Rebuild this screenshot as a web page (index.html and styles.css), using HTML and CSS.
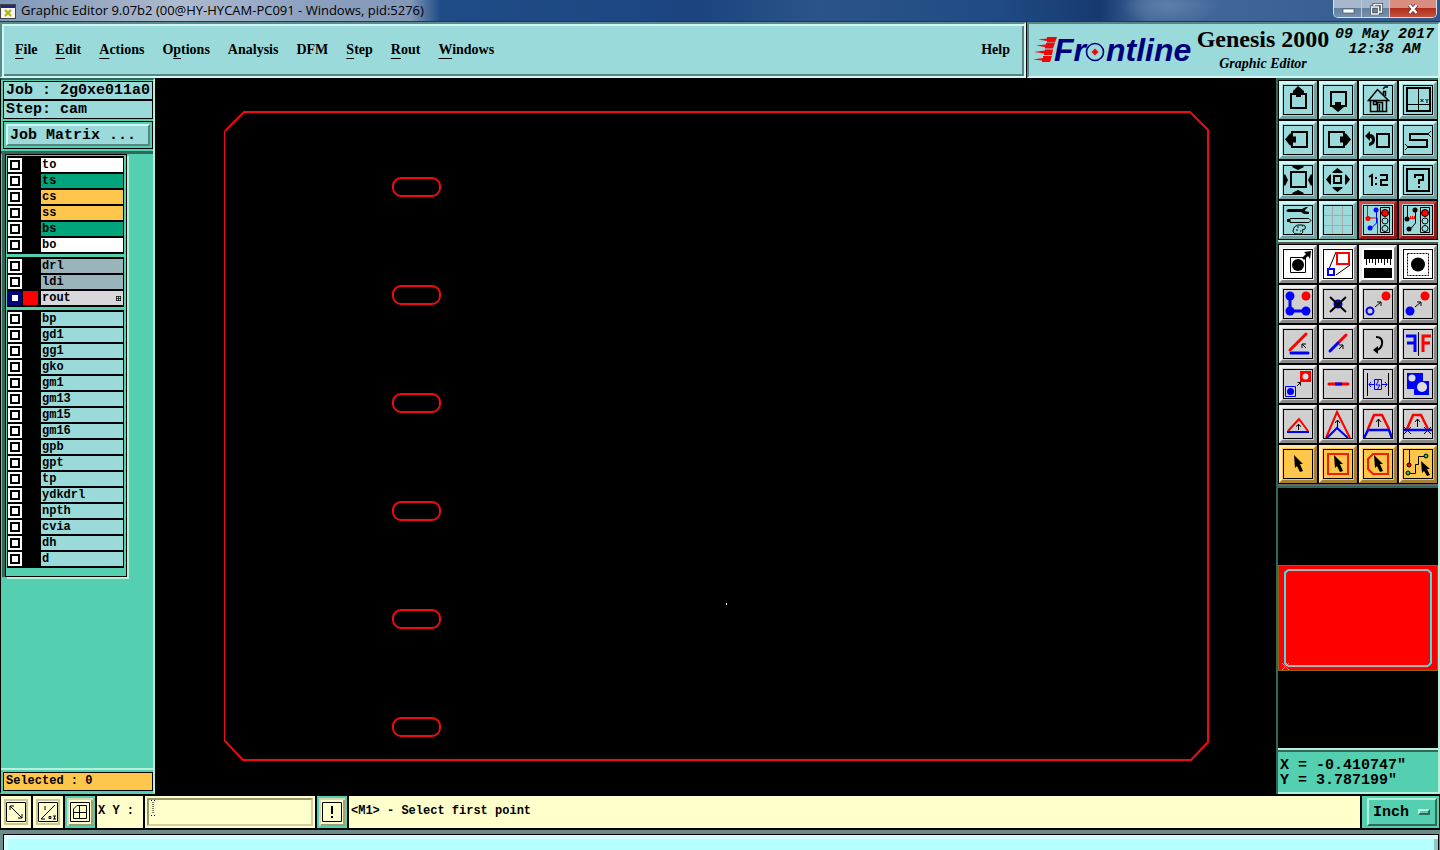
FILE: index.html
```html
<!DOCTYPE html>
<html lang="en">
<head>
<meta charset="utf-8">
<title>Graphic Editor 9.07b2</title>
<link rel="stylesheet" href="styles.css">
</head>
<body>
<header class="titlebar">
  <svg class="app-icon" viewBox="0 0 16 16"><rect x=".5" y=".5" width="15" height="14" fill="#f4f4f4" stroke="#444"/><rect x="1" y="1" width="14" height="3" fill="#1c2a80"/><path d="M5 6l6 6M11 6l-6 6" stroke="#b0b000" stroke-width="2"/></svg>
  <h1 class="title">Graphic Editor 9.07b2 (00@HY-HYCAM-PC091 - Windows, pid:5276)</h1>
  <div class="window-buttons">
    <button class="win" aria-label="Minimize"><svg viewBox="0 0 14 12"><rect x="2" y="6" width="11" height="4" fill="#fff" stroke="#456" stroke-width=".7"/></svg></button>
    <button class="win" aria-label="Restore"><svg viewBox="0 0 14 12"><path d="M5 3V1.500H12.500V9H10M2.500 4H9.500V11H2.500z" fill="none" stroke="#345" stroke-width="3"/><path d="M5 3V1.500H12.500V9H10M2.500 4H9.500V11H2.500z" fill="none" stroke="#fff" stroke-width="1.500"/></svg></button>
    <button class="win win-close" aria-label="Close"><svg viewBox="0 0 14 12"><path d="M3.500 2l7 8M10.500 2l-7 8" stroke="#533" stroke-width="4"/><path d="M3.500 2l7 8M10.500 2l-7 8" stroke="#fff" stroke-width="2.500"/></svg></button>
  </div>
</header>

<div class="topbar">
  <nav class="menubar">
    <button><u>F</u>ile</button><button><u>E</u>dit</button><button><u>A</u>ctions</button><button>O<u>p</u>tions</button><button>Analysis</button><button>DFM</button><button><u>S</u>tep</button><button><u>R</u>out</button><button><u>W</u>indows</button><button class="help">Help</button>
  </nav>
  <section class="brand">
    <svg class="logo" viewBox="0 0 162 32" role="img" aria-label="Frontline">
      <g fill="#f00808"><path d="M5 5.500L14 4.500V3H24L22 8.500H14V7z"/><path d="M3 11.500L13 10.500V9H22L20 14.500H12V13z"/><path d="M1 18L12 16.500V15.500H20L19 21H11V19.500z"/><path d="M0 25.500L10 24V22H19L17 28H9V26.500z"/></g>
      <text x="21" y="27" class="logo-text">Fr</text><text x="73" y="27" class="logo-text">ntline</text>
      <circle cx="62" cy="18" r="8.500" fill="none" stroke="#00007c" stroke-width="1.600"/><path d="M62 14.500l3.500 3.500-3.500 3.500-3.500-3.500z" fill="#f00808"/>
    </svg>
    <div class="product"><strong>Genesis 2000</strong><em>Graphic Editor</em></div>
    <time class="clock"><span>09 May 2017</span><span>12:38 AM</span></time>
  </section>
</div>

<main class="workspace">
  <aside class="layers">
    <div class="job">
      <div class="job-line">Job : 2g0xe011a0</div>
      <div class="job-line">Step: cam</div>
      <div class="matrix"><button>Job Matrix ...</button></div>
    </div>
    <div class="layer-area">
      <div class="layer-list">
        <div class="layer-group">
          <label class="layer white"><input type="checkbox"><i></i><span>to</span></label>
          <label class="layer green"><input type="checkbox"><i></i><span>ts</span></label>
          <label class="layer amber"><input type="checkbox"><i></i><span>cs</span></label>
          <label class="layer amber"><input type="checkbox"><i></i><span>ss</span></label>
          <label class="layer green"><input type="checkbox"><i></i><span>bs</span></label>
          <label class="layer white"><input type="checkbox"><i></i><span>bo</span></label>
        </div>
        <div class="layer-group">
          <label class="layer slate"><input type="checkbox"><i></i><span>drl</span></label>
          <label class="layer slate"><input type="checkbox"><i></i><span>ldi</span></label>
          <label class="layer silver"><input type="checkbox" checked><i></i><span>rout<svg class="mark" viewBox="0 0 5 5"><path d="M0 .5H5M0 2.500H5M0 4.500H5M.5 0V5M2.500 0V5M4.500 0V5" stroke="#000" stroke-width=".7"/></svg></span></label>
        </div>
        <div class="layer-group">
          <label class="layer"><input type="checkbox"><i></i><span>bp</span></label>
          <label class="layer"><input type="checkbox"><i></i><span>gd1</span></label>
          <label class="layer"><input type="checkbox"><i></i><span>gg1</span></label>
          <label class="layer"><input type="checkbox"><i></i><span>gko</span></label>
          <label class="layer"><input type="checkbox"><i></i><span>gm1</span></label>
          <label class="layer"><input type="checkbox"><i></i><span>gm13</span></label>
          <label class="layer"><input type="checkbox"><i></i><span>gm15</span></label>
          <label class="layer"><input type="checkbox"><i></i><span>gm16</span></label>
          <label class="layer"><input type="checkbox"><i></i><span>gpb</span></label>
          <label class="layer"><input type="checkbox"><i></i><span>gpt</span></label>
          <label class="layer"><input type="checkbox"><i></i><span>tp</span></label>
          <label class="layer"><input type="checkbox"><i></i><span>ydkdrl</span></label>
          <label class="layer"><input type="checkbox"><i></i><span>npth</span></label>
          <label class="layer"><input type="checkbox"><i></i><span>cvia</span></label>
          <label class="layer"><input type="checkbox"><i></i><span>dh</span></label>
          <label class="layer"><input type="checkbox"><i></i><span>d</span></label>
        </div>
      </div>
    </div>
    <div class="selected"><div>Selected : 0</div></div>
  </aside>

  <section class="canvas">
    <svg viewBox="155 78 1121 717" fill="none" stroke="#f00c0c" stroke-width="2">
      <path d="M225 131L244 112H1190L1208 130V742L1191 760H243L225 741"/><path d="M224.500 131V742" stroke-width="1"/>
      <rect x="393" y="178" width="47" height="18" rx="8"/><rect x="393" y="286" width="47" height="18" rx="8"/><rect x="393" y="394" width="47" height="18" rx="8"/><rect x="393" y="502" width="47" height="18" rx="8"/><rect x="393" y="610" width="47" height="18" rx="8"/><rect x="393" y="718" width="47" height="18" rx="8"/>
      <rect x="726" y="603" width="1" height="2" fill="#fff" stroke="none"/>
    </svg>
  </section>

  <aside class="tools">
    <div class="toolset view-tools">
      <button aria-label="Pan up"><svg viewBox="0 0 30 30"><path class="k2" d="M8 9H23V23H8z"/><path d="M15 1l6 5v2h-3v4h-5V8h-3V6z"/></svg></button>
      <button aria-label="Pan down"><svg viewBox="0 0 30 30"><path class="k2" d="M8 7H23V21H8z"/><path d="M15 27l6-5v-2h-3v-3h-6v3h-3v2z"/></svg></button>
      <button aria-label="Home"><svg viewBox="0 0 30 30"><path class="k1" stroke-width="1.500" d="M5.500 15.500L14.500 4.500 25.500 15.500zM7.500 15V26.500H23.500V15M10.500 16.500h3v3h-3zM14.500 26V17.500h5V26M16.500 26v-7M20.500 10V6.500h2V11M20 4l2-2h3"/></svg></button>
      <button aria-label="View coordinates"><svg viewBox="0 0 30 30"><path class="k2" d="M4 3H27V26H4z"/><path class="k1" d="M15.500 3V26M4 19.500H27M17.500 14l3 3m0-3l-3 3M22.500 14l1.500 1.500 1.500-1.500M24 15.500V18"/></svg></button>
      <button aria-label="Pan left"><svg viewBox="0 0 30 30"><path class="k2" d="M9 7H24V22H9z"/><path d="M2 14.500l5-6h2v3h4v6H9v3H7z"/></svg></button>
      <button aria-label="Pan right"><svg viewBox="0 0 30 30"><path class="k2" d="M6 7H21V22H6z"/><path d="M28 14.500l-5-6h-2v3h-4v6h4v3h2z"/></svg></button>
      <button aria-label="Previous view"><svg viewBox="0 0 30 30"><path class="k2" d="M14 9H26V22H14z"/><path d="M2 11l5-5v3q5 0 5 6 0 5-6 6v-3q3-1 3-3 0-2-2-2v3z"/></svg></button>
      <button aria-label="Snake view"><svg viewBox="0 0 30 30"><path class="k2" d="M25 9H7V15H24V22H5"/><path class="k1" d="M28 6l-3 3 3 3M2 19l3 3-3 3"/></svg></button>
      <button aria-label="Zoom in"><svg viewBox="0 0 30 30"><path class="k2" d="M8 7H23V22H8z"/><path d="M11 0h8l2 2-6 3-6-3zM11 30h8l2-2-6-3-6 3zM0 11v8l2 2 3-6-3-6zM30 11v8l-2 2-3-6 3-6z"/></svg></button>
      <button aria-label="Zoom out"><svg viewBox="0 0 30 30"><path class="k2" d="M11 11H18V18H11z"/><path d="M14.500 3l5 4v1h-10V7zM14.500 27l5-4v-1h-10v1zM3 14.500l4-5h1v10H7zM27 14.500l-4-5h-1v10h1z"/></svg></button>
      <button aria-label="Scale one to two"><svg viewBox="0 0 30 30"><path class="k2" d="M6 12l3-2v11M13 12v2M13 18v2M17 10H24V15H18V20H25"/></svg></button>
      <button aria-label="Query"><svg viewBox="0 0 30 30"><path class="k2" d="M4 4H26V26H4zM12 13V10H20V15H16V19M16 21V23"/></svg></button>
      <button aria-label="Options"><svg viewBox="0 0 30 30"><path d="M3 6l2-2h14l4-2h2l-3 3v1l4 1v2h-5l-3-2H5zM4 15v-1h3v3H4z"/><path class="k1" d="M7 13.500H26L28 15.500 26 17.500H7zM10 26q1-7 8-6 6 0 4 4l-3 1 1 2q-1 3-5 2-5 0-5-3zM14 22h2m3-1h1M13 25h2m2 1h1"/></svg></button>
      <button aria-label="Grid"><svg viewBox="0 0 30 30"><path d="M9.500 0V30M19.500 0V30M0 10.500H30M0 20.500H30" stroke="#a9a9a9"/></svg></button>
      <button class="alert" aria-label="Connectivity"><svg viewBox="0 0 30 30"><path d="M4.500 1V13H14.500V29" fill="none" stroke="red"/><path d="M13.500 5V18L8 23.500" fill="none" stroke="blue"/><circle cx="13" cy="5" r="2.500" fill="blue"/><circle cx="5" cy="13.500" r="2.500" fill="red"/><circle cx="7" cy="23" r="2.500" fill="blue"/><path class="k1" d="M17.500 2.500h9v25h-9z"/><circle cx="22" cy="8" r="3.500" fill="red" stroke="#000"/><circle class="k1" cx="22" cy="16" r="3"/><circle class="k1" cx="22" cy="23.500" r="3"/></svg></button>
      <button class="alert" aria-label="Spacing"><svg viewBox="0 0 30 30"><path class="k1" d="M4.500 1V13M12.500 5V18L8 23.500M17.500 2.500h9v25h-9z"/><circle cx="12" cy="5" r="2.500"/><circle cx="4" cy="14" r="2.500"/><circle cx="6" cy="24" r="2.500"/><path d="M6 13.500H12M7.500 11V14M9.500 11V14M11.500 11V14" stroke="red"/><circle cx="22" cy="8" r="3.500" fill="red" stroke="#000"/><circle class="k1" cx="22" cy="16" r="3"/><circle class="k1" cx="22" cy="23.500" r="3"/></svg></button>
    </div>

    <div class="toolset edit-tools">
      <button class="plain" aria-label="Pad"><svg viewBox="0 0 30 30"><path class="k1" d="M7.500 8.500h15v15h-15z"/><circle cx="15" cy="16" r="6"/><path d="M19 9l4-4-2-2 7-1-1 8-2-3-4 4z"/></svg></button>
      <button class="plain" aria-label="Resize"><svg viewBox="0 0 30 30"><path class="k1" d="M6 20L13 3M13 26L27 16"/><path d="M14 4H26V15H14z" fill="none" stroke="red" stroke-width="2"/><path d="M5 20H11V26H5z" fill="none" stroke="blue" stroke-width="2"/></svg></button>
      <button class="plain ruler" aria-label="Measure"><svg viewBox="0 0 30 30"><path d="M1 1H29V29H1z"/><path d="M1 10H29V19H1z" fill="#fff"/><path class="k1" d="M3.500 10v6M6.500 10v4M9.500 10v4M12.500 10v6M15.500 10v4M18.500 10v4M21.500 10v6M24.500 10v4M27.500 10v6"/></svg></button>
      <button class="plain" aria-label="Select feature"><svg viewBox="0 0 30 30"><path class="k1" d="M4.500 4.500h21v22h-21z" stroke-dasharray="2 1"/><circle cx="15" cy="15.500" r="7"/></svg></button>
      <button aria-label="Join points"><svg viewBox="0 0 30 30"><path d="M7 7V22H23" stroke="blue" stroke-width="3" fill="none"/><g fill="blue"><circle cx="7" cy="7" r="4.500"/><circle cx="7" cy="22" r="4.500"/><circle cx="23" cy="22" r="4.500"/></g><circle cx="23" cy="7" r="4.500" fill="red"/></svg></button>
      <button aria-label="Delete"><svg viewBox="0 0 30 30"><circle cx="15" cy="15" r="4.500" fill="#00a"/><path class="k2" d="M7 8L23 23M23 8L7 23"/></svg></button>
      <button aria-label="Copy"><svg viewBox="0 0 30 30"><circle cx="7" cy="22" r="3.500" fill="none" stroke="blue" stroke-width="2"/><circle cx="23" cy="7" r="4.500" fill="red"/><path class="k1" d="M12 18l6-5M14 13h4v4"/></svg></button>
      <button aria-label="Move"><svg viewBox="0 0 30 30"><circle cx="7" cy="22" r="4.500" fill="blue"/><circle cx="22" cy="7" r="4.500" fill="red"/><path class="k1" d="M12 18l6-5M14 13h4v4"/></svg></button>
      <button aria-label="Angle"><svg viewBox="0 0 30 30"><path d="M7 21L23 5" stroke="red" stroke-width="3" stroke-linecap="round"/><path d="M8 24H25" stroke="blue" stroke-width="3" stroke-linecap="round"/><path class="k1" d="M23 19l-4-4M19 19v-4h4"/></svg></button>
      <button aria-label="Extend"><svg viewBox="0 0 30 30"><path d="M15 14L23 6" stroke="red" stroke-width="3" stroke-linecap="round"/><path d="M7 22L15 14" stroke="blue" stroke-width="3" stroke-linecap="round"/><path class="k1" d="M16 20l4-4M16 16h4v4"/></svg></button>
      <button aria-label="Rotate"><svg viewBox="0 0 30 30"><path class="k2" d="M13 8Q20 8 19 15 18 21 12 21"/><path d="M10 21l5-4v8z"/></svg></button>
      <button aria-label="Mirror"><svg viewBox="0 0 30 30"><path class="k1" d="M15.500 3V27"/><path d="M3 7H12V23M4 14H12" fill="none" stroke="blue" stroke-width="3"/><path d="M28 7H20V23M27 14H20" fill="none" stroke="red" stroke-width="3"/></svg></button>
      <button aria-label="Substitute"><svg viewBox="0 0 30 30"><path d="M17 2h11v11H17z" fill="red"/><circle cx="22.500" cy="7.500" r="3" fill="#ddd"/><path d="M2.500 17.500h10v10h-10z" fill="none" stroke="blue"/><circle cx="7.500" cy="22.500" r="3.500" fill="blue"/><path class="k1" d="M14 17l3-3M14.500 13.500h3v3"/></svg></button>
      <button aria-label="Break line"><svg viewBox="0 0 30 30"><path d="M6 15H25" stroke="red" stroke-width="3" stroke-linecap="round"/><path d="M12 15H19" stroke="blue" stroke-width="3"/></svg></button>
      <button aria-label="Spread"><svg viewBox="0 0 30 30"><path class="k1" d="M4.500 4V27M25.500 4V27"/><path d="M6 15.500H11M19 15.500H24M8 13l-2 2.500L8 18M22 13l2 2.500L22 18M11.500 10.500h7v10h-7zM15 10v3l-2 3h4l-2 3v2" fill="none" stroke="blue"/></svg></button>
      <button aria-label="Cut shape"><svg viewBox="0 0 30 30"><path d="M4 4H20V12H26V26H11V20H4z" fill="blue"/><circle cx="9" cy="9" r="3.500" fill="#ddd"/><circle cx="19" cy="18" r="5" fill="#ddd"/></svg></button>
      <button aria-label="Low triangle"><svg viewBox="0 0 30 30"><path d="M5 22L16 10L25 22" fill="none" stroke="red" stroke-width="2"/><path d="M4 23H26" stroke="blue" stroke-width="2"/><path class="k1" d="M15.500 21V15M13 17.500l2.500-2 2.500 2"/></svg></button>
      <button aria-label="High triangle"><svg viewBox="0 0 30 30"><path d="M3 29L14 3L27 29" fill="none" stroke="red" stroke-width="2"/><path d="M4 29L14 19L25 29" fill="none" stroke="blue" stroke-width="2"/><path class="k1" d="M14.500 19V11M12 14l2.500-3 2.500 3"/></svg></button>
      <button aria-label="Trapezoid"><svg viewBox="0 0 30 30"><path d="M5 20L11 6H19L26 20" fill="none" stroke="red" stroke-width="2.500"/><path d="M1 29L5 21H26L29 29" fill="none" stroke="blue" stroke-width="2.500"/><path class="k1" d="M15.500 18V10M13 13l2.500-3 2.500 3"/></svg></button>
      <button aria-label="Open trapezoid"><svg viewBox="0 0 30 30"><path d="M4 20L10 6H18L25 20" fill="none" stroke="red" stroke-width="2.500"/><path d="M0 21H29" stroke="blue" stroke-width="2.500"/><path class="k1" d="M14.500 18V10M12 13l2.500-3 2.500 3M1 18l7 7M8 18l-7 7M21 18l7 7M28 18l-7 7"/></svg></button>
      <button class="pick" aria-label="Select"><svg viewBox="0 0 30 30"><path d="M11 6L20 15H17L20 22 17 23 14 17 12 19z"/></svg></button>
      <button class="pick" aria-label="Select in frame"><svg viewBox="0 0 30 30"><path d="M5 5H25V25H5z" fill="none" stroke="#f02000" stroke-width="2"/><path d="M11 6L20 15H17L20 22 17 23 14 17 12 19z"/></svg></button>
      <button class="pick" aria-label="Select in polygon"><svg viewBox="0 0 30 30"><path d="M10 5H25V25H10L5 20V10z" fill="none" stroke="#f02000" stroke-width="2"/><path d="M11 6L20 15H17L20 22 17 23 14 17 12 19z"/></svg></button>
      <button class="pick" aria-label="Select net"><svg viewBox="0 0 30 30"><path class="k1" d="M6.500 0V16M6 24.500H12.500V15.500H15.500V7.500H22"/><circle cx="6" cy="16" r="2" fill="red" stroke="#000"/><circle cx="5" cy="24" r="2" fill="#2c4" stroke="#000"/><circle cx="23" cy="7" r="2" fill="#2c4" stroke="#000"/><path d="M18 12L27 20H24L27 26 24 27 21 22 19 24z"/></svg></button>
    </div>

    <div class="navigator">
      <svg viewBox="0 0 160 106" fill="none">
        <rect x=".5" y=".5" width="159" height="105" fill="#f00" stroke="#8c6410"/>
        <path d="M10 6.500H150M10 102.500H150" stroke="#744"/><path d="M10 5H150M10 101H150" stroke="#b4b4b4" stroke-width="2"/>
        <path d="M10 5L7 8V98L10 101M150 5L153 8V98L150 101" stroke="#40e0e0" stroke-width="2"/>
        <path d="M4 98l7 7M11 98l-7 7" stroke="#c8b4b4"/>
      </svg>
    </div>
    <output class="coords"><span>X = -0.410747"</span><span>Y = 3.787199"</span></output>
  </aside>
</main>

<form class="command">
  <button type="button" class="cmd flat" aria-label="Snap"><svg viewBox="0 0 20 20"><path d="M.5.5h19v19H.5zM4 4L16 16M4 8V4H8M12 16H16V12"/></svg></button>
  <button type="button" class="cmd flat" aria-label="Angle mode"><svg viewBox="0 0 20 20"><path d="M.5.5h19v19H.5zM3 17L17 3M3 17H7M7 4V8M11 14.500h2v2h-2zM15 14h3M15 17h3M16.500 14v3"/></svg></button>
  <button type="button" class="cmd framed" aria-label="Grid snap"><svg viewBox="0 0 20 20"><path d="M.5.5h19v19H.5zM7 3.500H16.500V16.500H3.500V7zM9.500 3V17M3 10.500H17"/></svg></button>
  <label class="xy" for="xy">X Y :</label>
  <div class="entry"><input id="xy" type="text"><svg class="caret" viewBox="0 0 4 16"><path d="M2 2V14M0 .5H1M3 .5H4M0 15.500H1M3 15.500H4" stroke="#000" stroke-dasharray="1 1" fill="none"/></svg></div>
  <button type="button" class="cmd framed" aria-label="Alert"><svg viewBox="0 0 20 20"><path d="M.5.5h19v19H.5z"/><path d="M10 4V12M10 14V16" stroke-width="2"/></svg></button>
  <p class="message">&lt;M1&gt; - Select first point</p>
  <div class="unit"><select aria-label="Units"><option>Inch</option><option>MM</option></select><i></i></div>
</form>
<footer class="status"><div></div></footer>
</body>
</html>
```

FILE: styles.css
```css
* { box-sizing: border-box; }
:root {
  --teal: #54d0b0; --teal-dark: #33675b; --teal-light: #b4f0dc;
  --aqua: #9adada; --aqua-dark: #588484; --aqua-light: #d0f6f6;
  --cream: #ffffcc;
}
body { margin: 0; height: 100vh; overflow: hidden; display: flex; flex-direction: column; background: #000; color: #000; font-family: "Liberation Mono", monospace; font-weight: bold; }
button, input, select { font: inherit; color: inherit; margin: 0; padding: 0; border: 0; border-radius: 0; background: none; }
svg { display: block; }

.titlebar { flex: none; height: 22px; display: flex; align-items: flex-start; padding-right: 3px; border-bottom: 1px solid #27364c;
  background: radial-gradient(ellipse 50px 18px at 1170px 6px, #5f7fa8, transparent), linear-gradient(90deg, #7f98b8 0, #98a9c2 100px, #aebbd0 180px, #8da2c0 300px, #8398b8 410px, #1f4c86 440px, #1c4580 700px, #2a548a 820px, #1f4a84 1000px, #163a70 1100px, #44699a 1150px, #3a6296 1300px, #33568a 100%); }
.app-icon { width: 16px; height: 16px; margin: 4px 5px 0 0; }
.title { margin: 0; font: 13px/20px "Open Sans", sans-serif; flex: 1; white-space: nowrap; }
.window-buttons { display: flex; border: 1px solid #d4dfeb; border-top: 0; border-radius: 0 0 5px 5px; overflow: hidden; }
.win { width: 28px; height: 17px; display: grid; place-items: center; border-right: 1px solid #c0cddc; background: linear-gradient(#a7b7cb 45%, #64809f 50%, #7890ae); }
.win svg { width: 14px; height: 12px; }
.win-close { width: 46px; border: 0; background: linear-gradient(#d98c80 45%, #b22d1c 50%, #c5513b); }

.topbar { flex: none; display: flex; height: 56px; }
.menubar { flex: 1; margin-right: 1px; display: flex; align-items: center; gap: 18px; padding: 0 14px 0 13px; border: solid; border-width: 2px; border-color: #5c8a8a #d0f6f6 #d0f6f6 #5c8a8a; background: var(--aqua); box-shadow: inset 2px 2px var(--aqua-light), inset -2px -2px var(--aqua-dark); font: bold 14px/18px "Liberation Serif", serif; }
.menubar u { text-underline-offset: 4px; }
.menubar .help { margin-left: auto; }
.brand { width: 413px; display: flex; border: 2px solid; border-color: var(--aqua-dark) var(--aqua-light) var(--aqua-light) var(--aqua-dark); background: var(--aqua); font-family: "Liberation Serif", serif; }
.logo { width: 162px; height: 32px; margin: 10px 0 0 4px; overflow: visible; }
.logo-text { font: italic bold 32px "Liberation Sans", sans-serif; fill: #00007c; }
.product { width: 136px; display: flex; flex-direction: column; align-items: center; white-space: nowrap; }
.product strong { font-size: 24px; line-height: 30px; }
.product em { font-size: 14px; line-height: 20px; }
.clock { flex: 1; padding-top: 3px; display: flex; flex-direction: column; align-items: center; white-space: nowrap; font: italic bold 15px/15px "Liberation Mono", monospace; }

.workspace { flex: 1; min-height: 0; display: flex; }
.layers { width: 155px; flex: none; display: flex; flex-direction: column; margin-bottom: 1px; background: var(--teal); border: solid; border-width: 2px 2px 2px 1px; border-color: var(--teal-dark) var(--teal-light) var(--teal) #000; }
.job { padding: 1px 0 2px 2px; border-bottom: 3px solid var(--teal-dark); }
.job-line { height: 19px; padding-left: 2px; overflow: hidden; border: 1px solid #000; background: var(--aqua); font-size: 15px; line-height: 17px; white-space: nowrap; }
.matrix { margin-top: 2px; padding: 2px; border: 1px solid #000; }
.matrix button { width: 100%; height: 22px; padding-left: 2px; border: 2px solid; border-color: var(--aqua-light) var(--aqua-dark) var(--aqua-dark) var(--aqua-light); background: var(--aqua); font-size: 15px; line-height: 17px; text-align: left; }
.layer-area { flex: 1; padding-right: 26px; }
.layer-list { margin-left: 4px; padding: 1px 2px 8px 1px; border: 1px solid #000; box-shadow: 2px 2px var(--teal-light), -3px 0 var(--teal-dark); display: grid; gap: 3px; }
.layer-group { padding: 1px; background: #000; }
.layer { height: 16px; display: flex; align-items: center; }
.layer input { appearance: none; flex: none; width: 10px; height: 10px; margin: 0 3px 0 2px; border: 2px solid #000; background: #fff; box-shadow: 0 0 0 2px #fff; }
.layer input:checked { border-color: #00007c; box-shadow: 0 0 0 2px #00007c; }
.layer i { width: 15px; height: 14px; margin-right: 3px; }
.layer input:checked + i { background: #f00; }
.layer span { flex: 1; height: 14px; padding: 0 2px 0 1px; display: flex; align-items: center; justify-content: space-between; background: var(--aqua); font-size: 12px; line-height: 14px; }
.mark { width: 5px; height: 5px; }
.layer.white span { background: #fff; }
.layer.green span { background: #00a57c; }
.layer.amber span { background: #ffc64c; }
.layer.slate span { background: #9ab4bc; }
.layer.silver span { background: #d8d8dc; }
.selected { border-top: 2px solid var(--teal-light); padding: 2px 0 1px 2px; }
.selected div { height: 19px; padding-left: 2px; border: 1px solid #000; background: #ffc64c; font-size: 12px; line-height: 17px; }

.canvas { flex: 1; min-width: 0; }
.canvas svg { width: 100%; height: 100%; }

.tools { width: 164px; flex: none; display: flex; flex-direction: column; margin-bottom: 1px; border-left: 2px solid var(--teal-dark); border-right: 2px solid var(--teal-light); }
.toolset { display: grid; grid-template-columns: repeat(4, 1fr); gap: 2px; padding: 1px; border-top: 2px solid var(--teal-dark); border-bottom: 2px solid var(--teal-light); }
.toolset button { height: 38px; padding: 1px; display: grid; place-items: center; border: 3px solid; }
.toolset svg { width: 30px; height: 30px; outline: 1px solid #000; outline-offset: -1px; }
.view-tools button { background: var(--aqua); border-color: var(--aqua-light) #6fa3a3 #6fa3a3 var(--aqua-light); }
.view-tools .alert { border-color: #d44 #901818 #901818 #d44; }
.edit-tools { border-top-color: #555; border-bottom-color: #666; }
.edit-tools button { background: #cfcfcf; border-color: #efefef #8a8a8a #8a8a8a #efefef; }
.edit-tools .plain { background: #fff; }
.edit-tools .ruler svg { outline: 0; }
.edit-tools .pick { background: #ffc64c; border-color: #ffe8b0 #a88030 #a88030 #ffe8b0; }
.k1 { fill: none; stroke: #000; }
.k2 { fill: none; stroke: #000; stroke-width: 2; }
.navigator { flex: 1; min-height: 0; display: grid; align-items: center; background: #000; border-top: 2px solid var(--teal-dark); border-bottom: 2px solid var(--teal-light); }
.navigator svg { width: 100%; }
.coords { display: flex; flex-direction: column; height: 44px; padding: 6px 0 0 2px; border-top: 2px solid var(--teal-dark); border-bottom: 2px solid var(--teal-light); background: var(--teal); font-size: 15px; line-height: 15px; white-space: pre; }

.command { flex: none; height: 35px; display: flex; gap: 2px; padding: 1px 1px 2px; background: #000; font-size: 12px; }
.cmd { flex: none; width: 30px; display: grid; place-items: center; background: var(--cream); }
.cmd svg { width: 20px; height: 20px; fill: none; stroke: #000; }
.flat { border: 3px solid var(--cream); outline: 2px solid #c8c89c; outline-offset: -5px; }
.framed { border: 2px solid var(--teal); box-shadow: inset 2px 2px #d8d8b0, inset -2px -2px #a0a078; }
.xy { width: 46px; padding-left: 1px; background: var(--cream); line-height: 30px; white-space: nowrap; }
.entry { width: 170px; position: relative; padding: 2px; background: var(--cream); }
.entry input { width: 100%; height: 100%; padding: 0 12px; border: 2px solid; border-color: #98986c #d0d0a0 #d0d0a0 #98986c; background: var(--cream); }
.caret { position: absolute; left: 6px; top: 4px; width: 4px; height: 16px; }
.message { flex: 1; margin: 0; padding-left: 2px; background: var(--cream); line-height: 30px; }
.unit { width: 77px; position: relative; padding: 2px 2px 2px 5px; background: var(--teal); }
.unit select { appearance: none; width: 100%; height: 100%; padding-left: 4px; border: 2px solid; border-color: var(--teal-light) var(--teal-dark) var(--teal-dark) var(--teal-light); font-size: 15px; }
.unit i { position: absolute; right: 9px; top: 13px; width: 12px; height: 6px; border: 2px solid; border-color: var(--teal-light) var(--teal-dark) var(--teal-dark) var(--teal-light); pointer-events: none; }
.status { flex: none; height: 20px; overflow: hidden; padding: 3px 1px 0 3px; border-top: 1px solid #6c8c8c; background: #6c8c8c; }
.status div { height: 40px; border: 1px solid #000; background: #b4ffff; box-shadow: inset 4px 4px #d4ffff, inset -4px 0 #90c8c8; }
```
